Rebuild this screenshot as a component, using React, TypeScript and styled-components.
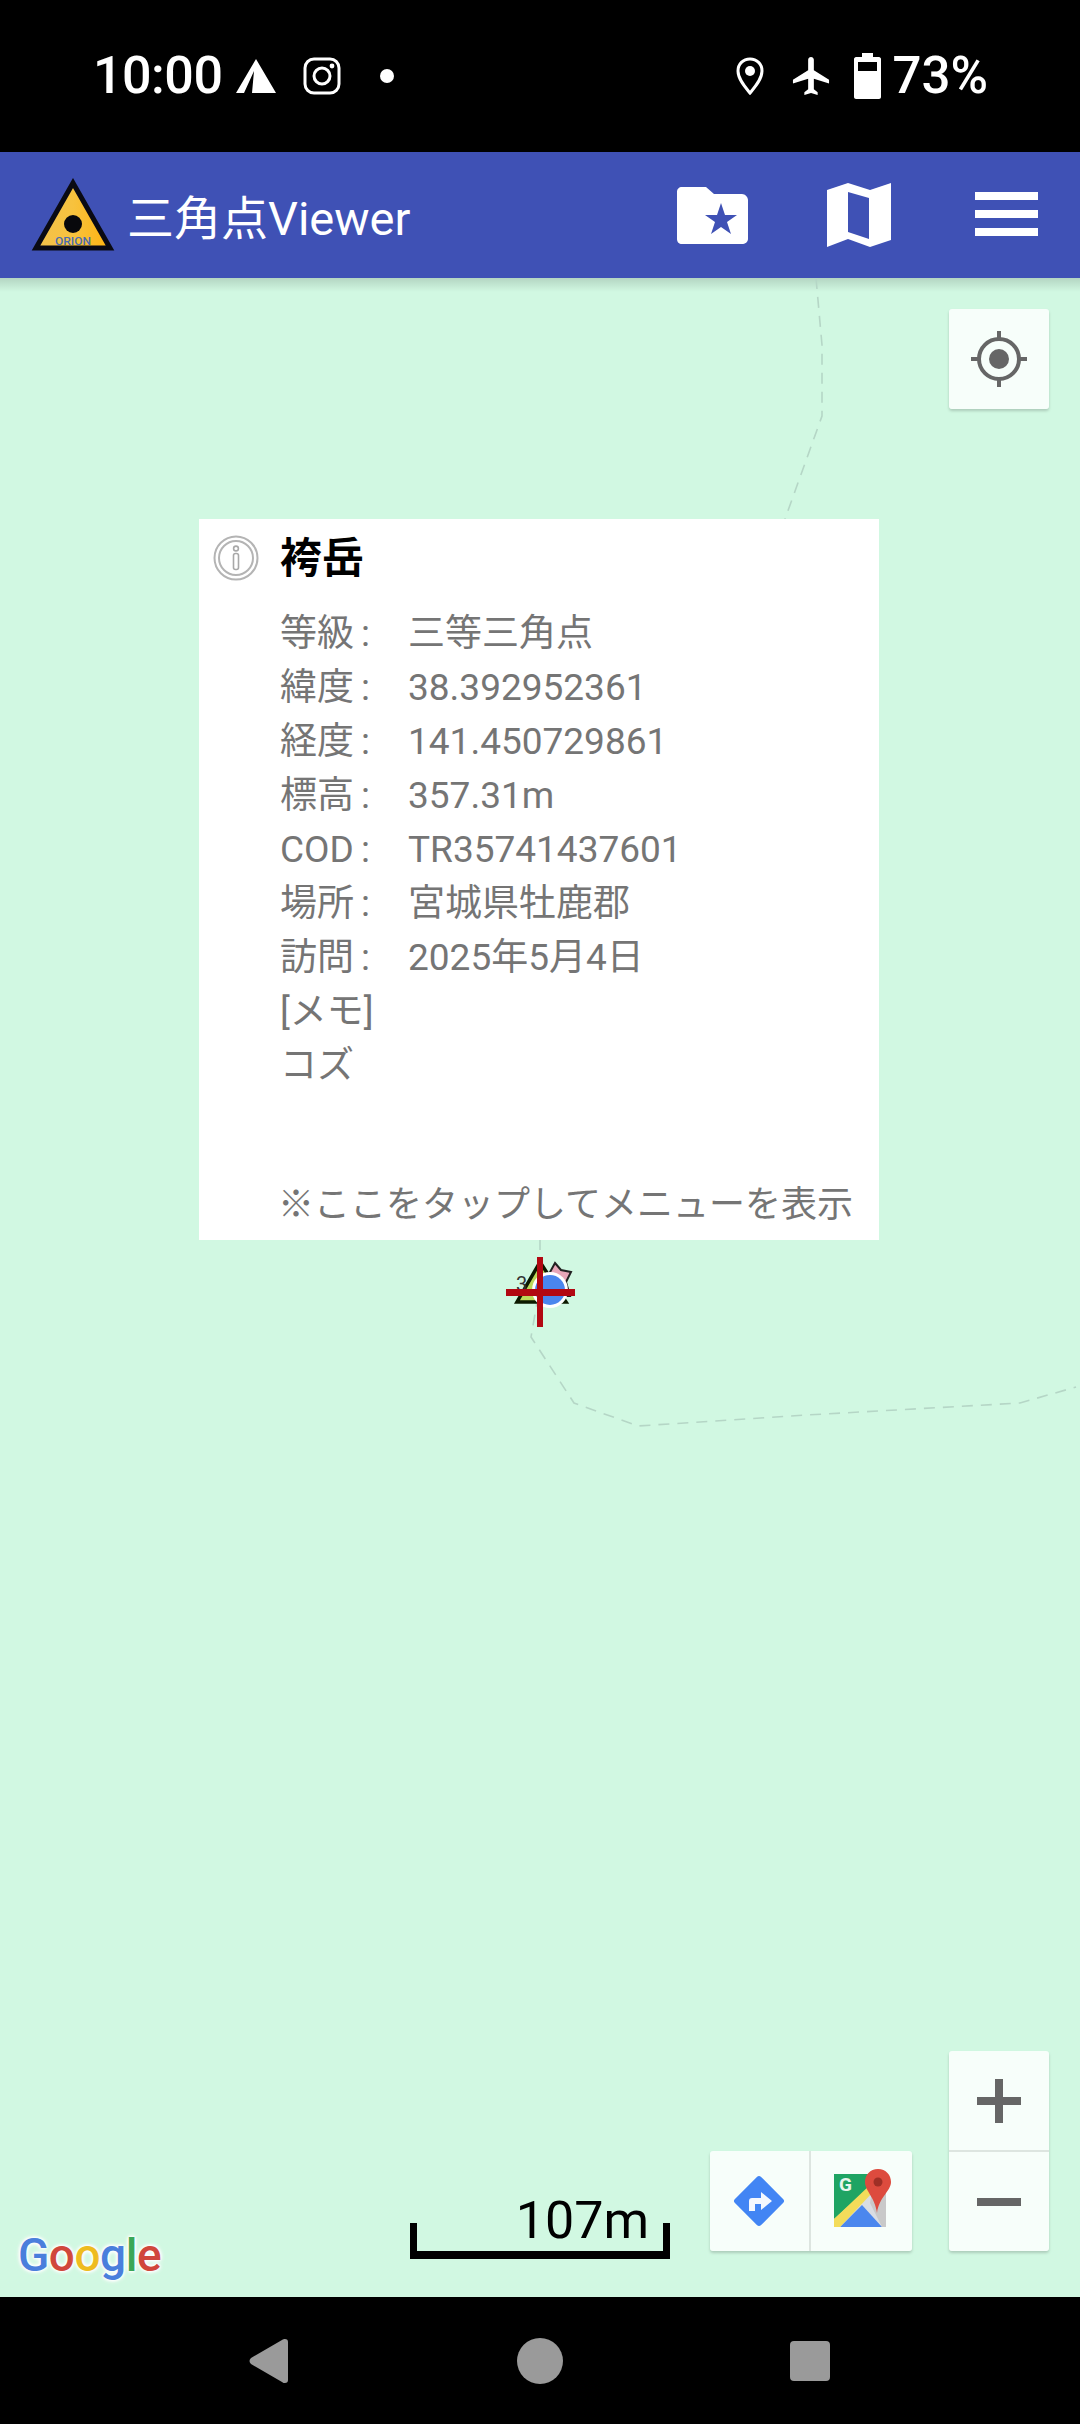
import React from "react";
import styled, { createGlobalStyle } from "styled-components";

const GlobalStyle = createGlobalStyle`
    html, body {
        margin: 0;
        padding: 0;
        background: #000;
    }
    body {
        font-family: Roboto, "Noto Sans CJK JP", sans-serif;
    }
`;

const INFO_ROWS = [
    { label: "等級", value: "三等三角点" },
    { label: "緯度", value: "38.392952361" },
    { label: "経度", value: "141.450729861" },
    { label: "標高", value: "357.31m" },
    { label: "COD", value: "TR35741437601" },
    { label: "場所", value: "宮城県牡鹿郡" },
    { label: "訪問", value: "2025年5月4日" },
];

const GOOGLE_LETTERS = [
    { ch: "G", color: "#4a7fdc" },
    { ch: "o", color: "#d0473c" },
    { ch: "o", color: "#eebc1f" },
    { ch: "g", color: "#4a7fdc" },
    { ch: "l", color: "#3aa757" },
    { ch: "e", color: "#d0473c" },
];

const App: React.FC = () => (
    <Page>
        <GlobalStyle />
        <StatusBar>
            <StatusGroup>
                <Clock>10:00</Clock>
                <StatusIcon $gap={14} width="40" height="36" viewBox="0 0 40 36">
                    <path d="M20 1L40 35H16L18 13L8 35H0Z" fill="#fff" />
                </StatusIcon>
                <StatusIcon $gap={27} width="38" height="38" viewBox="0 0 38 38">
                    <rect x="2" y="2" width="34" height="34" rx="9" fill="none" stroke="#fff" strokeWidth="3" />
                    <circle cx="19" cy="19" r="8" fill="none" stroke="#fff" strokeWidth="3" />
                    <circle cx="29" cy="9" r="2.4" fill="#fff" />
                </StatusIcon>
                <StatusDot />
            </StatusGroup>
            <StatusGroup>
                <StatusIcon $gap={0} width="28" height="38" viewBox="0 0 28 38">
                    <path d="M14 2C7 2 2 7 2 14C2 22 9 30 14 36C19 30 26 22 26 14C26 7 21 2 14 2Z" fill="none" stroke="#fff" strokeWidth="3" />
                    <circle cx="14" cy="14" r="5" fill="#fff" />
                </StatusIcon>
                <StatusIcon $gap={28} width="38" height="38" viewBox="2 2 19 20">
                    <path d="M21 16v-2l-8-5V3.5c0-.83-.67-1.5-1.5-1.5S10 2.67 10 3.5V9l-8 5v2l8-2.5V19l-2 1.5V22l3.5-1 3.5 1v-1.5L13 19v-5.5l8 2.5z" fill="#fff" />
                </StatusIcon>
                <StatusIcon $gap={24} width="27" height="46" viewBox="0 0 27 46">
                    <path d="M8 0H19V4H25C26 4 27 5 27 6V44C27 45 26 46 25 46H2C1 46 0 45 0 44V6C0 5 1 4 2 4H8Z" fill="#fff" />
                    <rect x="4" y="9" width="19" height="9" fill="#000" />
                </StatusIcon>
                <Battery>73%</Battery>
            </StatusGroup>
        </StatusBar>

        <AppBar>
            <Brand>
                <svg width="84" height="74" viewBox="0 0 84 74">
                    <defs>
                        <linearGradient id="logoFill" x1="0" y1="0" x2="1" y2="0">
                            <stop offset="0" stopColor="#f3c14c" />
                            <stop offset="0.5" stopColor="#f7c23e" />
                            <stop offset="1" stopColor="#ffb30f" />
                        </linearGradient>
                    </defs>
                    <path d="M42 5L79 70H5Z" fill="url(#logoFill)" stroke="#0a0a14" strokeWidth="5" />
                    <circle cx="42" cy="46" r="9" fill="#08080c" />
                    <text x="24" y="67" fontSize="11" fontWeight="500" fill="#4a6cb0" textLength="36" lengthAdjust="spacingAndGlyphs" fontFamily="Roboto, sans-serif">ORION</text>
                </svg>
                <Title>三角点Viewer</Title>
            </Brand>
            <Actions>
                <svg width="71" height="57" viewBox="0 0 71 57">
                    <path d="M5 0H29L37 7H65C68 7 71 10 71 13V52C71 55 68 57 65 57H5C2 57 0 55 0 52V5C0 2 2 0 5 0Z" fill="#fff" />
                    <path d="M44 16L48 28H60L50 35L54 47L44 40L34 47L38 35L28 28H40Z" fill="#3f51b5" />
                </svg>
                <svg width="64" height="64" viewBox="0 0 64 64">
                    <path d="M0 7L21 0L43 7L64 0V57L43 64L21 56L0 64Z" fill="#fff" />
                    <path d="M21 9L42 15V56L21 49Z" fill="#3f51b5" />
                </svg>
                <Burger>
                    <BurgerBar />
                    <BurgerBar />
                    <BurgerBar />
                </Burger>
            </Actions>
        </AppBar>

        <MapArea>
            <MapShade />
            <MapDrawing viewBox="0 278 1080 2019">
                <RoadPath d="M816 278L822 345L822 416L785 519" />
                <RoadPath d="M540 1239L540 1285L531 1337L574 1403L638 1426L807 1415L1020 1403L1076 1387" />
                <path d="M555 1263L561 1270L571 1272L566 1282L570 1296L553 1296L540 1284L549 1274Z" fill="#e8a6b8" stroke="#222" strokeWidth="2" />
                <path d="M540 1262L566 1302H517Z" fill="#bcd85a" stroke="#0c1a00" strokeWidth="3.5" />
                <text x="516" y="1291" fontSize="20" fill="#333" fontFamily="Roboto, sans-serif">3</text>
                <circle cx="550" cy="1290" r="18" fill="#fff" />
                <circle cx="550" cy="1290" r="15" fill="#4a86ee" />
                <rect x="506" y="1289" width="69" height="7" fill="#b20812" />
                <rect x="537" y="1257" width="6" height="70" fill="#b20812" />
            </MapDrawing>

            <LocateButton>
                <svg width="60" height="60" viewBox="0 0 60 60">
                    <circle cx="30" cy="30" r="20" fill="none" stroke="#666" strokeWidth="4" />
                    <circle cx="30" cy="30" r="10" fill="#666" />
                    <path d="M30 2V10M30 50V58M2 30H10M50 30H58" stroke="#666" strokeWidth="4" />
                </svg>
            </LocateButton>

            <InfoWindow>
                <InfoHeader>
                    <InfoBadge>
                        <svg width="46" height="46" viewBox="0 0 46 46">
                            <circle cx="23" cy="23" r="21.5" fill="none" stroke="#b4b4b4" strokeWidth="2" />
                            <circle cx="23" cy="23" r="17" fill="none" stroke="#b4b4b4" strokeWidth="2" />
                            <circle cx="23" cy="13.5" r="2.4" fill="none" stroke="#a8a8a8" strokeWidth="1.6" />
                            <rect x="20.5" y="18.5" width="5" height="16" rx="2" fill="none" stroke="#a8a8a8" strokeWidth="1.6" />
                        </svg>
                    </InfoBadge>
                    <InfoTitle>袴岳</InfoTitle>
                </InfoHeader>
                {INFO_ROWS.map((row) => (
                    <InfoRow key={row.label}>
                        <span>{row.label}</span>
                        <span>:</span>
                        <span>{row.value}</span>
                    </InfoRow>
                ))}
                <InfoLine>[メモ]</InfoLine>
                <InfoLine>コズ</InfoLine>
                <InfoNote>※ここをタップしてメニューを表示</InfoNote>
            </InfoWindow>

            <GoogleMark>
                {GOOGLE_LETTERS.map((letter, i) => (
                    <GoogleLetter key={i} $color={letter.color}>{letter.ch}</GoogleLetter>
                ))}
            </GoogleMark>

            <ScaleBar>
                <ScaleText>107m</ScaleText>
            </ScaleBar>

            <MapTools>
                <ToolCell>
                    <svg width="54" height="54" viewBox="0 0 54 54">
                        <rect x="8.5" y="8.5" width="37" height="37" rx="3" transform="rotate(45 27 27)" fill="#4285f4" />
                        <path d="M17 37V27C17 25 18 24 20 24H29V18L40 27L29 36V30H23V37Z" fill="#f4f8fe" />
                    </svg>
                </ToolCell>
                <ToolCell $shift={3}>
                    <svg width="58" height="64" viewBox="0 0 58 64">
                        <path d="M0 5H52V58H0Z" fill="#1fa463" />
                        <path d="M0 58V50L36 18L52 30V58Z" fill="#d9dde3" />
                        <path d="M6 58L28 36L48 58Z" fill="#4b87ee" />
                        <path d="M0 50L36 16L40 22L6 58H0Z" fill="#f3dc5a" />
                        <path d="M38 22L52 18V58H48L36 34Z" fill="#c9c9c9" />
                        <path d="M44 0C36 0 31 6 31 13C31 22 41 28 43 44C45 28 57 22 57 13C57 6 52 0 44 0Z" fill="#dd4b3e" />
                        <circle cx="44" cy="13" r="4.5" fill="#9f2f26" />
                        <text x="5" y="22" fontSize="19" fontWeight="700" fill="#e8f5ec" fontFamily="Roboto, sans-serif">G</text>
                    </svg>
                </ToolCell>
            </MapTools>

            <ZoomStack>
                <ZoomCell>
                    <ZoomPlus />
                </ZoomCell>
                <ZoomCell>
                    <ZoomMinus />
                </ZoomCell>
            </ZoomStack>
        </MapArea>

        <NavBar>
            <svg width="40" height="46" viewBox="0 0 40 46">
                <path d="M36 1C38 1 39 2 39 4V42C39 44 38 45 36 45C35 45 34 45 33 44L2 26C0 24 0 22 2 20L33 2C34 1 35 1 36 1Z" fill="#9a9a9a" />
            </svg>
            <HomeDot />
            <RecentSquare />
        </NavBar>
    </Page>
);

const Page = styled.div`
    width: 1080px;
    height: 2424px;
    display: flex;
    flex-direction: column;
    overflow: hidden;
    background: #000;
`;

const StatusBar = styled.div`
    height: 152px;
    flex: none;
    padding: 0 92px 0 93px;
    display: flex;
    align-items: center;
    justify-content: space-between;
    background: #000;
    color: #fff;
`;

const StatusGroup = styled.div`
    display: flex;
    align-items: center;
`;

const Clock = styled.span`
    font-size: 52px;
    font-weight: 500;
    line-height: 52px;
    letter-spacing: -0.5px;
`;

const StatusIcon = styled.svg<{ $gap: number }>`
    display: block;
    flex: none;
    margin-left: ${({ $gap }) => $gap}px;
`;

const StatusDot = styled.div`
    width: 14px;
    height: 14px;
    margin-left: 39px;
    border-radius: 50%;
    background: #fff;
`;

const Battery = styled.span`
    margin-left: 11px;
    font-size: 51px;
    font-weight: 500;
    line-height: 52px;
`;

const AppBar = styled.header`
    height: 126px;
    flex: none;
    padding: 0 42px 0 32px;
    display: flex;
    align-items: center;
    justify-content: space-between;
    background: #3f51b5;
    position: relative;
    z-index: 2;
`;

const Brand = styled.div`
    display: flex;
    align-items: center;
    gap: 14px;
    svg {
        margin-left: -1px;
        margin-right: -2px;
    }
`;

const Title = styled.h1`
    margin: 0;
    padding-top: 7px;
    color: #fff;
    font-size: 47px;
    font-weight: 400;
    line-height: 60px;
`;

const Actions = styled.div`
    display: flex;
    align-items: center;
    gap: 79px;
`;

const Burger = styled.div`
    width: 63px;
    display: flex;
    flex-direction: column;
    gap: 10px;
    margin-left: 5px;
    margin-bottom: 3px;
`;

const BurgerBar = styled.span`
    height: 8px;
    background: #fff;
`;

const MapArea = styled.main`
    position: relative;
    flex: 1;
    background: #d1f8e2;
`;

const MapShade = styled.div`
    position: absolute;
    top: 0;
    left: 0;
    right: 0;
    height: 14px;
    background: linear-gradient(to bottom, rgba(0, 0, 0, 0.14), rgba(0, 0, 0, 0));
`;

const MapDrawing = styled.svg`
    position: absolute;
    top: 0;
    left: 0;
    width: 1080px;
    height: 2019px;
`;

const RoadPath = styled.path`
    fill: none;
    stroke: #b5d6c6;
    stroke-width: 1.6;
    stroke-dasharray: 11 8;
`;

const MapButton = styled.div`
    background: rgba(255, 255, 255, 0.82);
    border-radius: 3px;
    box-shadow: 0 2px 3px rgba(0, 0, 0, 0.18);
`;

const LocateButton = styled(MapButton)`
    position: absolute;
    top: 31px;
    right: 31px;
    width: 100px;
    height: 100px;
    display: flex;
    align-items: center;
    justify-content: center;
`;

const InfoWindow = styled.section`
    position: absolute;
    top: 241px;
    left: 199px;
    width: 680px;
    padding: 0 0 8px 81px;
    box-sizing: border-box;
    background: #fff;
    color: #757575;
    font-size: 37px;
    line-height: 54px;
`;

const InfoHeader = styled.div`
    height: 88px;
    display: flex;
    align-items: center;
    padding-bottom: 9px;
    box-sizing: border-box;
`;

const InfoBadge = styled.div`
    position: absolute;
    top: 16px;
    left: 14px;
    line-height: 0;
`;

const InfoTitle = styled.h2`
    margin: 0;
    color: #000;
    font-size: 42px;
    font-weight: 700;
    line-height: 60px;
`;

const InfoRow = styled.div`
    display: grid;
    grid-template-columns: 81px 47px 1fr;
`;

const InfoLine = styled.div`
    height: 54px;
`;

const InfoNote = styled.div`
    margin: 85px 0 0 -2px;
    font-size: 36px;
    white-space: nowrap;
`;

const GoogleMark = styled.div`
    position: absolute;
    left: 18px;
    bottom: 14px;
    font-size: 46px;
    font-weight: 500;
    line-height: 56px;
    letter-spacing: -0.5px;
    text-shadow: 0 0 5px #fff, 0 0 5px #fff, 0 0 3px #fff, 0 0 3px #fff;
`;

const GoogleLetter = styled.span<{ $color: string }>`
    color: ${({ $color }) => $color};
`;

const ScaleBar = styled.div`
    position: absolute;
    left: 410px;
    bottom: 38px;
    width: 260px;
    height: 36px;
    box-sizing: border-box;
    border: 7px solid #000;
    border-top: 0;
    border-bottom-width: 8px;
`;

const ScaleText = styled.span`
    position: absolute;
    right: 14px;
    bottom: 0;
    color: #000;
    font-size: 52px;
    line-height: 60px;
`;

const MapTools = styled(MapButton)`
    position: absolute;
    right: 168px;
    bottom: 46px;
    width: 202px;
    height: 100px;
    display: flex;
`;

const ToolCell = styled.div<{ $shift?: number }>`
    flex: 1;
    display: flex;
    align-items: center;
    justify-content: center;
    padding-left: ${({ $shift }) => $shift ?? 0}px;
    & + & {
        border-left: 2px solid #dde5e0;
    }
`;

const ZoomStack = styled(MapButton)`
    position: absolute;
    right: 31px;
    bottom: 46px;
    width: 100px;
    height: 200px;
    display: flex;
    flex-direction: column;
`;

const ZoomCell = styled.div`
    flex: 1;
    position: relative;
    & + & {
        border-top: 2px solid #dde5e0;
    }
`;

const ZoomMinus = styled.span`
    position: absolute;
    top: 50%;
    left: 28px;
    width: 44px;
    height: 8px;
    margin-top: -4px;
    background: #666;
`;

const ZoomPlus = styled(ZoomMinus)`
    &::after {
        content: "";
        position: absolute;
        top: -18px;
        left: 18px;
        width: 8px;
        height: 44px;
        background: #666;
    }
`;

const NavBar = styled.nav`
    height: 127px;
    flex: none;
    padding-left: 249px;
    padding-right: 250px;
    display: flex;
    align-items: center;
    justify-content: space-between;
    background: #000;
`;

const HomeDot = styled.div`
    width: 46px;
    height: 46px;
    border-radius: 50%;
    background: #9a9a9a;
`;

const RecentSquare = styled.div`
    width: 40px;
    height: 40px;
    border-radius: 4px;
    background: #9a9a9a;
`;

export default App;
